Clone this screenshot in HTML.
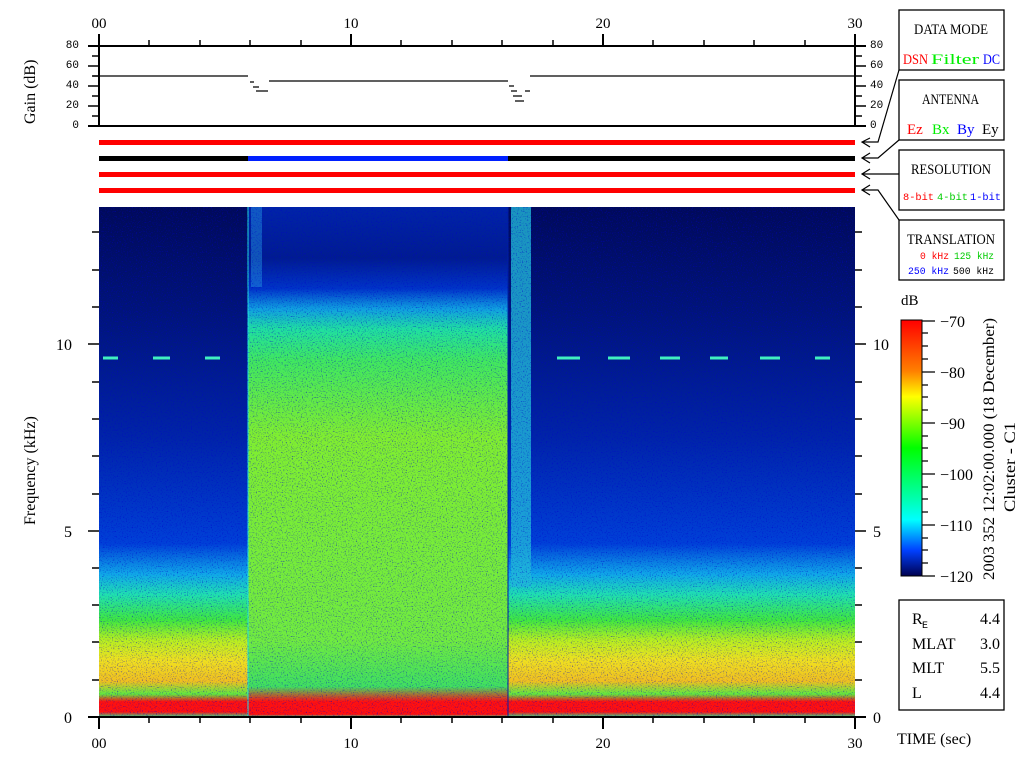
<!DOCTYPE html>
<html><head><meta charset="utf-8"><style>
html,body{margin:0;padding:0;background:#fff;width:1024px;height:768px;overflow:hidden}
svg{display:block}
text{font-family:"Liberation Serif",serif;}
.m text,text.m{font-family:"Liberation Mono",monospace;}
</style></head><body>
<svg width="1024" height="768" viewBox="0 0 1024 768" xmlns="http://www.w3.org/2000/svg">
<defs>
<linearGradient id="side" x1="0" y1="207" x2="0" y2="717" gradientUnits="userSpaceOnUse">
<stop offset="0" stop-color="#000a5a"/>
<stop offset="0.2" stop-color="#001478"/>
<stop offset="0.45" stop-color="#0024a8"/>
<stop offset="0.66" stop-color="#0040d8"/>
<stop offset="0.72" stop-color="#10a8e8"/>
<stop offset="0.76" stop-color="#20e0b0"/>
<stop offset="0.81" stop-color="#40e840"/>
<stop offset="0.85" stop-color="#b8f020"/>
<stop offset="0.89" stop-color="#f0e020"/>
<stop offset="0.93" stop-color="#f0c020"/>
<stop offset="0.955" stop-color="#60e840"/>
<stop offset="0.97" stop-color="#ff1010"/>
<stop offset="0.99" stop-color="#ff1010"/>
<stop offset="1" stop-color="#30e090"/>
</linearGradient>
<linearGradient id="mid" x1="0" y1="207" x2="0" y2="717" gradientUnits="userSpaceOnUse">
<stop offset="0" stop-color="#0024a8"/>
<stop offset="0.1" stop-color="#001c90"/>
<stop offset="0.16" stop-color="#0034c8"/>
<stop offset="0.2" stop-color="#10a0e0"/>
<stop offset="0.24" stop-color="#20e0a0"/>
<stop offset="0.3" stop-color="#40e860"/>
<stop offset="0.45" stop-color="#80ee30"/>
<stop offset="0.85" stop-color="#70ec40"/>
<stop offset="0.94" stop-color="#40e060"/>
<stop offset="0.97" stop-color="#ff1010"/>
<stop offset="0.995" stop-color="#ff1010"/>
<stop offset="1" stop-color="#30e090"/>
</linearGradient>
<linearGradient id="cb" x1="0" y1="320" x2="0" y2="576" gradientUnits="userSpaceOnUse">
<stop offset="0" stop-color="#ff0000"/>
<stop offset="0.2" stop-color="#ff8000"/>
<stop offset="0.3" stop-color="#ffff00"/>
<stop offset="0.5" stop-color="#00ff00"/>
<stop offset="0.7" stop-color="#00ffb0"/>
<stop offset="0.78" stop-color="#00ffff"/>
<stop offset="0.9" stop-color="#0040ff"/>
<stop offset="1" stop-color="#000050"/>
</linearGradient>
<filter id="nz" x="0" y="0" width="100%" height="100%">
<feTurbulence type="fractalNoise" baseFrequency="0.8" numOctaves="1" seed="3"/>
<feColorMatrix values="0 0 0 0 0  0 0 0 0 0  0 0 0 0 0.6  0 0 0 4 -2.2"/>
</filter>
</defs>

<!-- spectrogram -->
<rect x="99" y="207" width="149" height="510" fill="url(#side)"/>
<rect x="248" y="207" width="260" height="510" fill="url(#mid)"/>
<rect x="508" y="207" width="347" height="510" fill="url(#side)"/>
<rect x="511" y="207" width="20" height="380" fill="#20b8d8" opacity="0.8"/>
<rect x="251" y="207" width="11" height="80" fill="#2090e0" opacity="0.5"/>
<line x1="248" y1="207" x2="248" y2="717" stroke="#20e0e0" stroke-width="1"/>
<line x1="508" y1="207" x2="508" y2="717" stroke="#0020a0" stroke-width="1"/>
<rect x="99" y="207" width="756" height="510" filter="url(#nz)" opacity="0.6"/>
<g stroke="#40f0c0" stroke-width="3">
<line x1="103" y1="358" x2="118" y2="358"/><line x1="153" y1="358" x2="170" y2="358"/><line x1="205" y1="358" x2="220" y2="358"/>
<line x1="557" y1="358" x2="580" y2="358"/><line x1="608" y1="358" x2="630" y2="358"/><line x1="660" y1="358" x2="680" y2="358"/><line x1="710" y1="358" x2="728" y2="358"/><line x1="760" y1="358" x2="780" y2="358"/><line x1="815" y1="358" x2="830" y2="358"/>
</g>

<!-- axes -->
<g stroke="#000" stroke-width="2" fill="none">
<line x1="88" y1="717" x2="866" y2="717"/>
<line x1="88" y1="46" x2="866" y2="46"/>
<line x1="88" y1="126" x2="866" y2="126"/>
<line x1="99" y1="34" x2="99" y2="126"/>
<line x1="855" y1="34" x2="855" y2="126"/>
<line x1="99" y1="717" x2="99" y2="729"/><line x1="351" y1="717" x2="351" y2="729"/><line x1="603" y1="717" x2="603" y2="729"/><line x1="855" y1="717" x2="855" y2="729"/>
<line x1="351" y1="34" x2="351" y2="46"/><line x1="603" y1="34" x2="603" y2="46"/>
</g>
<g stroke="#000" stroke-width="1.5">
<path d="M149 40V46M200 40V46M250 40V46M301 40V46M401 40V46M452 40V46M502 40V46M553 40V46M653 40V46M704 40V46M754 40V46M805 40V46"/>
<path d="M149 717V723M200 717V723M250 717V723M301 717V723M401 717V723M452 717V723M502 717V723M553 717V723M653 717V723M704 717V723M754 717V723M805 717V723"/>
<path d="M88 66H99M88 86H99M88 106H99M92 56H99M92 76H99M92 96H99M92 116H99"/>
<path d="M855 66H866M855 86H866M855 106H866M855 56H862M855 76H862M855 96H862M855 116H862"/>
<path d="M88 531H99M88 344H99M92 680H99M92 642H99M92 605H99M92 568H99M92 494H99M92 456H99M92 419H99M92 382H99M92 307H99M92 270H99M92 232H99"/>
<path d="M855 531H866M855 344H866M855 680H862M855 642H862M855 605H862M855 568H862M855 494H862M855 456H862M855 419H862M855 382H862M855 307H862M855 270H862M855 232H862"/>
</g>
<!-- gain line -->
<path d="M93 76H248M250 82H254M253 87H259M256 91H268M269 81H508M509 86H514M511 91H517M513 96H522M515 101H524M525 91H530M530 76H855" stroke="#000" stroke-width="1.3" fill="none"/>

<!-- bars -->
<rect x="99" y="140" width="756" height="5" fill="#ff0000"/>
<rect x="99" y="156" width="149" height="5" fill="#000"/>
<rect x="248" y="156" width="260" height="5" fill="#0020ff"/>
<rect x="508" y="156" width="347" height="5" fill="#000"/>
<rect x="99" y="172" width="756" height="5" fill="#ff0000"/>
<rect x="99" y="188" width="756" height="5" fill="#ff0000"/>

<!-- arrows -->
<g stroke="#000" stroke-width="1.2" fill="none">
<path d="M870 138L862 142L870 147M862 142H878L899 70"/>
<path d="M870 153L862 158L870 163M862 158H878L899 140"/>
<path d="M870 169L862 174L870 179M862 174H899"/>
<path d="M870 185L862 190L870 195M862 190H878L899 220"/>
</g>

<!-- labels -->
<g font-size="15" fill="#000" text-anchor="middle">
<text x="99" y="28">00</text><text x="351" y="28">10</text><text x="603" y="28">20</text><text x="855" y="28">30</text>
<text x="99" y="748">00</text><text x="351" y="748">10</text><text x="603" y="748">20</text><text x="855" y="748">30</text>
</g>
<g class="m" font-size="11" fill="#000" text-anchor="end">
<text x="79" y="48">80</text><text x="79" y="68">60</text><text x="79" y="88">40</text><text x="79" y="108">20</text><text x="79" y="128">0</text>
</g>
<g class="m" font-size="11" fill="#000">
<text x="870" y="48">80</text><text x="870" y="68">60</text><text x="870" y="88">40</text><text x="870" y="108">20</text><text x="870" y="128">0</text>
</g>
<g font-size="16" fill="#000">
<text x="72" y="723" text-anchor="end">0</text><text x="72" y="537" text-anchor="end">5</text><text x="72" y="350" text-anchor="end">10</text>
<text x="873" y="723">0</text><text x="873" y="537">5</text><text x="873" y="350">10</text>
</g>
<text transform="translate(35,124) rotate(-90)" font-size="16">Gain (dB)</text>
<text transform="translate(35,525) rotate(-90)" font-size="16">Frequency (kHz)</text>
<text x="897" y="744" font-size="16">TIME (sec)</text>

<!-- boxes -->
<g stroke="#000" stroke-width="1.3" fill="#fff">
<rect x="899" y="10" width="105" height="60"/>
<rect x="899" y="80" width="105" height="60"/>
<rect x="899" y="150" width="105" height="60"/>
<rect x="899" y="220" width="105" height="60"/>
<rect x="899" y="600" width="105" height="110"/>
</g>
<g font-size="15">
<text x="914" y="34" textLength="74" lengthAdjust="spacingAndGlyphs">DATA MODE</text>
<text x="922" y="104" textLength="57" lengthAdjust="spacingAndGlyphs">ANTENNA</text>
<text x="911" y="174" textLength="80" lengthAdjust="spacingAndGlyphs">RESOLUTION</text>
<text x="907" y="244" textLength="88" lengthAdjust="spacingAndGlyphs">TRANSLATION</text>
</g>
<g font-size="15">
<text x="903" y="64" fill="#ff0000" textLength="25" lengthAdjust="spacingAndGlyphs">DSN</text><text x="931" y="64" fill="#00ee00" textLength="48" lengthAdjust="spacingAndGlyphs">Filter</text><text x="983" y="64" fill="#0000ff" textLength="17" lengthAdjust="spacingAndGlyphs">DC</text>
<text x="907" y="134" fill="#ff0000">Ez</text><text x="932" y="134" fill="#00ee00">Bx</text><text x="957" y="134" fill="#0000ff">By</text><text x="982" y="134" fill="#000">Ey</text>
</g>
<g class="m" font-size="10">
<text x="903" y="200" fill="#ff0000" textLength="31" lengthAdjust="spacingAndGlyphs">8-bit</text><text x="937" y="200" fill="#00cc00" textLength="31" lengthAdjust="spacingAndGlyphs">4-bit</text><text x="970" y="200" fill="#0000ff" textLength="31" lengthAdjust="spacingAndGlyphs">1-bit</text>
<text x="920" y="259" fill="#ff0000" textLength="29" lengthAdjust="spacingAndGlyphs">0 kHz</text><text x="954" y="259" fill="#00cc00" textLength="40" lengthAdjust="spacingAndGlyphs">125 kHz</text>
<text x="908" y="274" fill="#0000ff" textLength="41" lengthAdjust="spacingAndGlyphs">250 kHz</text><text x="953" y="274" fill="#000" textLength="41" lengthAdjust="spacingAndGlyphs">500 kHz</text>
</g>

<!-- colorbar -->
<rect x="901" y="320" width="21" height="256" fill="url(#cb)" stroke="#000" stroke-width="1"/>
<g stroke="#000" stroke-width="1.3">
<path d="M922 321H935M922 372H935M922 423H935M922 474H935M922 525H935M922 576H935"/>
<path d="M922 333H928M922 346H928M922 359H928M922 385H928M922 397H928M922 410H928M922 436H928M922 448H928M922 461H928M922 487H928M922 499H928M922 512H928M922 538H928M922 550H928M922 563H928"/>
</g>
<text x="901" y="305" font-size="15">dB</text>
<g font-size="16">
<text x="940" y="327">−70</text><text x="940" y="378">−80</text><text x="940" y="429">−90</text>
<text x="940" y="480">−100</text><text x="940" y="531">−110</text><text x="940" y="582">−120</text>
</g>
<text transform="translate(994,580) rotate(-90)" font-size="16" textLength="262" lengthAdjust="spacingAndGlyphs">2003 352 12:02:00.000 (18 December)</text>
<text transform="translate(1015,512) rotate(-90)" font-size="16" textLength="90" lengthAdjust="spacingAndGlyphs">Cluster - C1</text>

<!-- info box -->
<g font-size="16">
<text x="912" y="624">R</text><text x="922" y="628" font-size="10" class="m">E</text><text x="1000" y="624" text-anchor="end">4.4</text>
<text x="912" y="649">MLAT</text><text x="1000" y="649" text-anchor="end">3.0</text>
<text x="912" y="673">MLT</text><text x="1000" y="673" text-anchor="end">5.5</text>
<text x="912" y="698">L</text><text x="1000" y="698" text-anchor="end">4.4</text>
</g>
</svg>
</body></html>
